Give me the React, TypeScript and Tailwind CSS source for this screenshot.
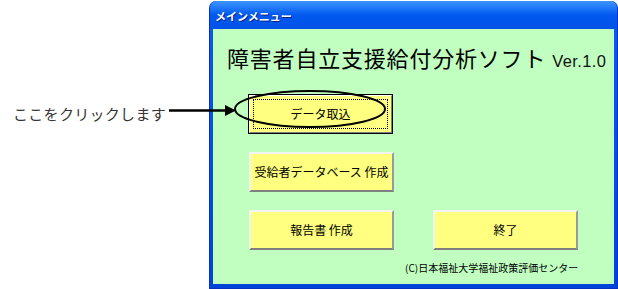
import React from "react";

const jp = { fontFamily: '"Noto Sans CJK JP", "Noto Sans", sans-serif' };

function XpButton({ label, focused }: { label: string; focused?: boolean }) {
  if (focused) {
    return (
      <div className="w-[145px] h-[40px] border border-black bg-[#ffff80] flex">
        <div className="flex-1 border-t border-l border-t-white border-l-white border-b border-r border-b-[#808080] border-r-[#808080] p-[3px] flex">
          <div className="flex-1 border border-dotted border-black flex items-center justify-center text-[12px] text-black leading-none">
            {label}
          </div>
        </div>
      </div>
    );
  }
  return (
    <div className="w-[145px] h-[40px] bg-[#ffff80] border-t-2 border-l-2 border-t-[#f4f4f4] border-l-[#f4f4f4] border-b-2 border-r-2 border-b-[#808080] border-r-[#9a9a9a] flex items-center justify-center text-[12px] text-black leading-none">
      {label}
    </div>
  );
}

export default function App() {
  return (
    <div className="w-[618px] h-[289px] bg-white flex relative overflow-hidden" style={jp}>
      <div className="w-[209px] shrink-0 pt-[101px] pl-[13px]">
        <span className="text-[15px] leading-[20px] text-[#333333] tracking-[0.3px]">ここをクリックします</span>
      </div>
      <div className="w-[409px] h-[288px] mt-[1px] flex flex-col rounded-t-[7px] bg-gradient-to-b from-[#0a5ee8] to-[#0044d8] border-l border-r border-b border-[#0831c4]">
        <div className="h-[28px] shrink-0 rounded-t-[7px] bg-gradient-to-b from-[#3d95ff] via-[#0058ee] to-[#0153e8] flex items-center pl-[5px] pt-[2px]">
          <span className="text-[11px] font-bold text-white leading-none [text-shadow:1px_1px_0_#0a1f80]">
            メインメニュー
          </span>
        </div>
        <div className="flex-1 mx-[3px] mb-[4px] bg-[#c0ffc0] flex flex-col pl-[14px]">
          <div className="mt-[15px] flex items-baseline text-black">
            <span className="text-[22px] leading-[26px] tracking-[0.8px]">障害者自立支援給付分析ソフト</span>
            <span className="ml-[6px] text-[16.5px] leading-none tracking-[0.4px] text-[#111]" style={{ fontFamily: '"Liberation Sans", Arial, sans-serif' }}>
              Ver.1.0
            </span>
          </div>
          <div className="mt-[24px] ml-[21px]">
            <XpButton label="データ取込" focused />
          </div>
          <div className="mt-[18px] ml-[22px]">
            <XpButton label="受給者データベース 作成" />
          </div>
          <div className="mt-[18px] ml-[22px] flex gap-[39px]">
            <XpButton label="報告書 作成" />
            <XpButton label="終了" />
          </div>
          <div className="mt-[13px] pl-[178px] text-[10px] leading-none text-black">
            (C)日本福祉大学福祉政策評価センター
          </div>
        </div>
      </div>
      <svg className="absolute left-0 top-0 pointer-events-none" width="618" height="289">
        <line x1="169" y1="110.5" x2="228" y2="110.5" stroke="#000" strokeWidth="2.5" />
        <polygon points="236,110.5 225,105 225,116" fill="#000" />
        <ellipse cx="310" cy="109" rx="75" ry="18" fill="none" stroke="#000" strokeWidth="2" />
      </svg>
    </div>
  );
}
